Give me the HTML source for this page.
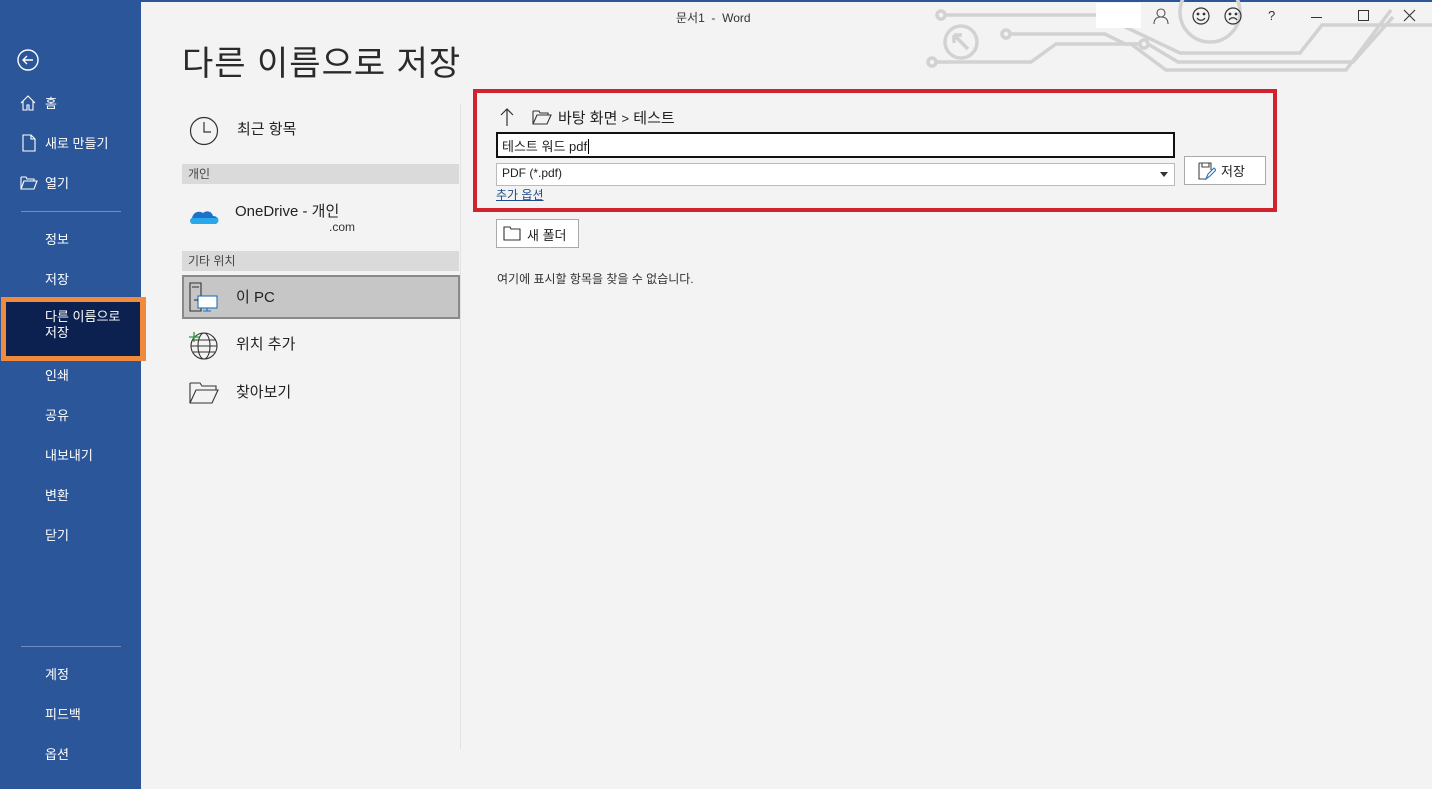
<!DOCTYPE html>
<html><head><meta charset="utf-8"><style>
*{margin:0;padding:0;box-sizing:border-box}
body{width:1432px;height:789px;overflow:hidden;background:#f3f3f3;font-family:"Liberation Sans","Noto Sans CJK KR",sans-serif;position:relative;color:#222}
.abs{position:absolute}
#side{left:0;top:0;width:141px;height:789px;background:#2b579a;color:#fff}
#side .it{position:absolute;left:45px;font-size:13px;color:#fff}
.sep{position:absolute;left:21px;width:100px;height:1px;background:#6f8fc4}
.t{white-space:nowrap}
</style></head><body>
<div class="abs" style="left:0;top:0;width:1432px;height:2px;background:#2b579a"></div>
<div id="side" class="abs">
<svg class="abs" style="left:17px;top:49px" width="22" height="22" viewBox="0 0 22 22"><circle cx="11" cy="11" r="10" fill="none" stroke="#fff" stroke-width="1.4"/><path d="M16 11H6M10 7l-4 4 4 4" fill="none" stroke="#fff" stroke-width="1.4"/></svg>
<svg class="abs" style="left:20px;top:95px" width="16" height="16" viewBox="0 0 16 16"><path d="M1 8L8 1l7 7M3 6v9h4v-5h2v5h4V6" fill="none" stroke="#fff" stroke-width="1.1"/></svg>
<div class="it t" style="top:93px">홈</div>
<svg class="abs" style="left:22px;top:134px" width="14" height="18" viewBox="0 0 14 18"><path d="M1 1h8l4 4v12H1z M9 1v4h4" fill="none" stroke="#fff" stroke-width="1.1"/></svg>
<div class="it t" style="top:133px">새로 만들기</div>
<svg class="abs" style="left:20px;top:176px" width="18" height="14" viewBox="0 0 18 14"><path d="M1 1h5l1 2h7v2M1 1v12h13l3-8H4L1 13" fill="none" stroke="#fff" stroke-width="1.1"/></svg>
<div class="it t" style="top:173px">열기</div>
<div class="sep" style="top:211px"></div>
<div class="it t" style="top:229px">정보</div>
<div class="it t" style="top:269px">저장</div>
<div class="abs" style="left:1px;top:297px;width:145px;height:64px;background:#f08a3c"></div>
<div class="abs" style="left:6px;top:302px;width:134px;height:54px;background:#0c2150"></div>
<div class="it" style="top:309px;line-height:16px">다른 이름으로<br>저장</div>
<div class="it t" style="top:365px">인쇄</div>
<div class="it t" style="top:405px">공유</div>
<div class="it t" style="top:445px">내보내기</div>
<div class="it t" style="top:485px">변환</div>
<div class="it t" style="top:525px">닫기</div>
<div class="sep" style="top:646px"></div>
<div class="it t" style="top:664px">계정</div>
<div class="it t" style="top:704px">피드백</div>
<div class="it t" style="top:744px">옵션</div>
</div>

<svg class="abs" style="left:900px;top:0" width="532" height="80" viewBox="900 0 532 80" fill="none" stroke="#d2d2d2" stroke-width="3.5">
<circle cx="941" cy="15" r="4"/><path d="M945 15H1100l80 38h120l22-28h110"/>
<circle cx="1006" cy="34" r="4"/><path d="M1010 34h95l20 10h15"/><circle cx="1144" cy="44" r="4"/><path d="M1148 44l30 18h175l40-45"/>
<circle cx="932" cy="62" r="4"/><path d="M936 62h95l25-18h75l35 26h180l45-60"/>
<circle cx="961" cy="42" r="16"/><path d="M954 35l14 14M954 35h8M954 35v8"/>
<circle cx="1210" cy="12" r="30"/>
</svg>
<div class="abs" style="left:1096px;top:3px;width:45px;height:25px;background:#fff"></div>
<div class="abs t" style="left:676px;top:9px;font-size:12px;color:#333">문서1 &nbsp;- &nbsp;Word</div>
<svg class="abs" style="left:1152px;top:7px" width="18" height="18" viewBox="0 0 18 18" fill="none" stroke="#555" stroke-width="1.1"><circle cx="9" cy="6" r="4"/><path d="M2 17c0-5 3-7 7-7s7 2 7 7"/></svg>
<svg class="abs" style="left:1191px;top:6px" width="20" height="20" viewBox="0 0 20 20" fill="none" stroke="#333" stroke-width="1.2"><circle cx="10" cy="10" r="8"/><circle cx="7" cy="8" r=".8" fill="#333"/><circle cx="13" cy="8" r=".8" fill="#333"/><path d="M6 12c2 3 6 3 8 0"/></svg>
<svg class="abs" style="left:1223px;top:6px" width="20" height="20" viewBox="0 0 20 20" fill="none" stroke="#333" stroke-width="1.2"><circle cx="10" cy="10" r="8"/><circle cx="7" cy="8" r=".8" fill="#333"/><circle cx="13" cy="8" r=".8" fill="#333"/><path d="M6 14c2-3 6-3 8 0"/></svg>
<div class="abs" style="left:1268px;top:8px;font-size:13px;color:#333">?</div>
<div class="abs" style="left:1311px;top:17px;width:11px;height:1px;background:#333"></div>
<div class="abs" style="left:1358px;top:10px;width:11px;height:11px;border:1px solid #333"></div>
<svg class="abs" style="left:1403px;top:9px" width="13" height="13" viewBox="0 0 13 13" stroke="#333" stroke-width="1.1"><path d="M1 1l11 11M12 1L1 12"/></svg>

<div class="abs t" style="left:182px;top:36px;font-size:34px;color:#2a2a2a;letter-spacing:1px">다른 이름으로 저장</div>

<svg class="abs" style="left:189px;top:116px" width="30" height="30" viewBox="0 0 30 30" fill="none" stroke="#333" stroke-width="1.2"><circle cx="15" cy="15" r="13.5"/><path d="M15 6v10h7"/></svg>
<div class="abs t" style="left:237px;top:118px;font-size:15px">최근 항목</div>
<div class="abs" style="left:182px;top:164px;width:277px;height:20px;background:#dadada"></div>
<div class="abs t" style="left:188px;top:165px;font-size:12px;color:#444">개인</div>
<svg class="abs" style="left:189px;top:206px" width="30" height="20" viewBox="0 0 30 20"><path d="M4 18c-3 0-4-5-1-6 1-5 6-8 11-5 3-3 9-2 10 3 4 0 6 3 5 6-1 1-2 2-3 2z" fill="#1a73c9"/><path d="M4 18c-3 0-4-4-1-6h26c1 2 0 6-3 6z" fill="#28a8ea"/></svg>
<div class="abs t" style="left:235px;top:200px;font-size:15px">OneDrive - 개인</div>
<div class="abs t" style="left:329px;top:220px;font-size:12px;color:#333">.com</div>
<div class="abs" style="left:182px;top:251px;width:277px;height:20px;background:#dadada"></div>
<div class="abs t" style="left:188px;top:252px;font-size:12px;color:#444">기타 위치</div>
<div class="abs" style="left:182px;top:275px;width:278px;height:44px;background:#c6c6c6;border:2px solid #8a8a8a"></div>
<svg class="abs" style="left:189px;top:282px" width="32" height="30" viewBox="0 0 32 30" fill="none" stroke="#333" stroke-width="1.1"><path d="M1 1h11v28H1z M3 5h7"/><rect x="9" y="14" width="19" height="12" fill="#fff" stroke="#1f6fbf"/><path d="M18 26v3M14 29h8" stroke="#1f6fbf"/><path d="M5 18h4" /></svg>
<div class="abs t" style="left:236px;top:286px;font-size:15px">이 PC</div>
<svg class="abs" style="left:188px;top:329px" width="32" height="32" viewBox="0 0 32 32" fill="none" stroke="#333" stroke-width="1.1"><circle cx="16" cy="17" r="13"/><ellipse cx="16" cy="17" rx="6" ry="13"/><path d="M3 17h26M5 11h22M5 23h22"/><path d="M1 8h10M6 3v10" stroke="#2a9a3a" stroke-width="1.3"/></svg>
<div class="abs t" style="left:236px;top:333px;font-size:15px">위치 추가</div>
<svg class="abs" style="left:189px;top:381px" width="30" height="24" viewBox="0 0 30 24" fill="none" stroke="#333" stroke-width="1.1"><path d="M1 2h10l2 3h14v4M1 2v20h22l6-13H7L1 22"/></svg>
<div class="abs t" style="left:236px;top:381px;font-size:15px">찾아보기</div>
<div class="abs" style="left:460px;top:104px;width:1px;height:645px;background:#e2e2e2"></div>

<div class="abs" style="left:473px;top:89px;width:804px;height:123px;border:4px solid #d0232b"></div>
<svg class="abs" style="left:500px;top:107px" width="14" height="20" viewBox="0 0 14 20" fill="none" stroke="#333" stroke-width="1.2"><path d="M7 19V2M1 8l6-6 6 6"/></svg>
<svg class="abs" style="left:532px;top:110px" width="20" height="15" viewBox="0 0 20 15" fill="none" stroke="#333" stroke-width="1.1"><path d="M1 1h6l1 2h8v2M1 1v13h14l4-9H5L1 14"/></svg>
<div class="abs t" style="left:558px;top:107px;font-size:15px">바탕 화면 <span style="font-size:13px">&gt;</span> 테스트</div>
<div class="abs" style="left:496px;top:132px;width:679px;height:26px;border:2px solid #111;background:#fff"></div>
<div class="abs t" style="left:502px;top:136px;font-size:13px">테스트 워드 pdf<span style="border-left:1px solid #000;margin-left:1px"></span></div>
<div class="abs" style="left:496px;top:163px;width:679px;height:23px;border:1px solid #bbb;background:#fff"></div>
<div class="abs t" style="left:502px;top:166px;font-size:12px">PDF (*.pdf)</div>
<div class="abs" style="left:1160px;top:172px;width:0;height:0;border-left:4px solid transparent;border-right:4px solid transparent;border-top:5px solid #333"></div>
<div class="abs t" style="left:496px;top:186px;font-size:12px;color:#1e4e8c;text-decoration:underline">추가 옵션</div>
<div class="abs" style="left:1184px;top:156px;width:82px;height:29px;border:1px solid #aaa;background:#fff"></div>
<svg class="abs" style="left:1198px;top:162px" width="18" height="18" viewBox="0 0 18 18" fill="none" stroke="#444" stroke-width="1.1"><path d="M1 1h12v7M1 1v16h7M4 1v4h7V1"/><path d="M8 17l2-5 6-6 2 2-6 6z" stroke="#2a6fbf"/></svg>
<div class="abs t" style="left:1221px;top:161px;font-size:13px">저장</div>
<div class="abs" style="left:496px;top:219px;width:83px;height:29px;border:1px solid #aaa;background:#fff"></div>
<svg class="abs" style="left:503px;top:226px" width="18" height="15" viewBox="0 0 18 15" fill="none" stroke="#333" stroke-width="1.1"><path d="M1 1h6l1 2h9v11H1z"/></svg>
<div class="abs t" style="left:527px;top:225px;font-size:13px">새 폴더</div>
<div class="abs t" style="left:497px;top:270px;font-size:12px;color:#333">여기에 표시할 항목을 찾을 수 없습니다.</div>
</body></html>
